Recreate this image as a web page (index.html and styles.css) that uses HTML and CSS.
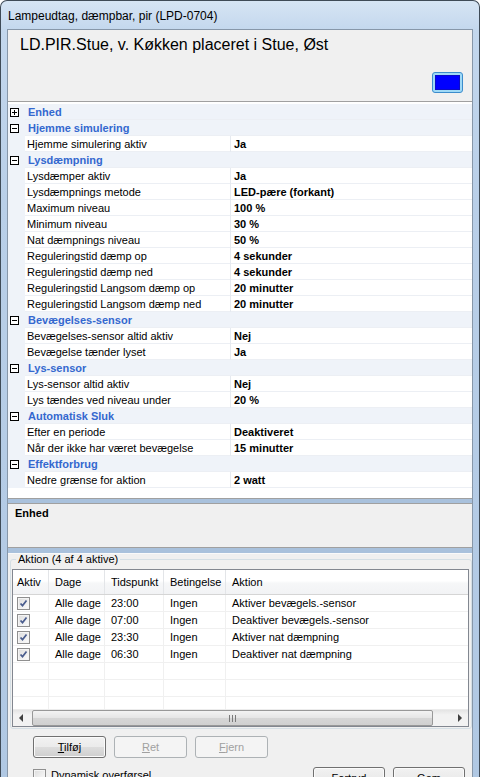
FILE: index.html
```html
<!DOCTYPE html>
<html lang="da">
<head>
<meta charset="utf-8">
<title>Lampeudtag</title>
<link rel="stylesheet" href="styles.css">
</head>
<body>
<div class="window">
  <div class="titlebar">Lampeudtag, dæmpbar, pir (LPD-0704)</div>
  <div class="client">
    <div class="header">
      <div class="header-title">LD.PIR.Stue, v. Køkken placeret i Stue, Øst</div>
      <div class="color-btn"><span class="swatch"></span></div>
    </div>

    <div class="grid">
      <div class="row cat"><span class="m"><svg class="tog" width="9" height="9" viewBox="0 0 9 9"><rect x="0.5" y="0.5" width="8" height="8" fill="#fff" stroke="#000"/><path d="M2 4.5h5M4.5 2v5" stroke="#000"/></svg></span><span class="cn">Enhed</span></div>
      <div class="row cat"><span class="m"><svg class="tog" width="9" height="9" viewBox="0 0 9 9"><rect x="0.5" y="0.5" width="8" height="8" fill="#fff" stroke="#000"/><path d="M2 4.5h5" stroke="#000"/></svg></span><span class="cn">Hjemme simulering</span></div>
      <div class="row"><span class="m"></span><span class="n">Hjemme simulering aktiv</span><span class="v">Ja</span></div>
      <div class="row cat"><span class="m"><svg class="tog" width="9" height="9" viewBox="0 0 9 9"><rect x="0.5" y="0.5" width="8" height="8" fill="#fff" stroke="#000"/><path d="M2 4.5h5" stroke="#000"/></svg></span><span class="cn">Lysdæmpning</span></div>
      <div class="row"><span class="m"></span><span class="n">Lysdæmper aktiv</span><span class="v">Ja</span></div>
      <div class="row"><span class="m"></span><span class="n">Lysdæmpnings metode</span><span class="v">LED-pære (forkant)</span></div>
      <div class="row"><span class="m"></span><span class="n">Maximum niveau</span><span class="v">100 %</span></div>
      <div class="row"><span class="m"></span><span class="n">Minimum niveau</span><span class="v">30 %</span></div>
      <div class="row"><span class="m"></span><span class="n">Nat dæmpnings niveau</span><span class="v">50 %</span></div>
      <div class="row"><span class="m"></span><span class="n">Reguleringstid dæmp op</span><span class="v">4 sekunder</span></div>
      <div class="row"><span class="m"></span><span class="n">Reguleringstid dæmp ned</span><span class="v">4 sekunder</span></div>
      <div class="row"><span class="m"></span><span class="n">Reguleringstid Langsom dæmp op</span><span class="v">20 minutter</span></div>
      <div class="row"><span class="m"></span><span class="n">Reguleringstid Langsom dæmp ned</span><span class="v">20 minutter</span></div>
      <div class="row cat"><span class="m"><svg class="tog" width="9" height="9" viewBox="0 0 9 9"><rect x="0.5" y="0.5" width="8" height="8" fill="#fff" stroke="#000"/><path d="M2 4.5h5" stroke="#000"/></svg></span><span class="cn">Bevægelses-sensor</span></div>
      <div class="row"><span class="m"></span><span class="n">Bevægelses-sensor altid aktiv</span><span class="v">Nej</span></div>
      <div class="row"><span class="m"></span><span class="n">Bevægelse tænder lyset</span><span class="v">Ja</span></div>
      <div class="row cat"><span class="m"><svg class="tog" width="9" height="9" viewBox="0 0 9 9"><rect x="0.5" y="0.5" width="8" height="8" fill="#fff" stroke="#000"/><path d="M2 4.5h5" stroke="#000"/></svg></span><span class="cn">Lys-sensor</span></div>
      <div class="row"><span class="m"></span><span class="n">Lys-sensor altid aktiv</span><span class="v">Nej</span></div>
      <div class="row"><span class="m"></span><span class="n">Lys tændes ved niveau under</span><span class="v">20 %</span></div>
      <div class="row cat"><span class="m"><svg class="tog" width="9" height="9" viewBox="0 0 9 9"><rect x="0.5" y="0.5" width="8" height="8" fill="#fff" stroke="#000"/><path d="M2 4.5h5" stroke="#000"/></svg></span><span class="cn">Automatisk Sluk</span></div>
      <div class="row"><span class="m"></span><span class="n">Efter en periode</span><span class="v">Deaktiveret</span></div>
      <div class="row"><span class="m"></span><span class="n">Når der ikke har været bevægelse</span><span class="v">15 minutter</span></div>
      <div class="row cat"><span class="m"><svg class="tog" width="9" height="9" viewBox="0 0 9 9"><rect x="0.5" y="0.5" width="8" height="8" fill="#fff" stroke="#000"/><path d="M2 4.5h5" stroke="#000"/></svg></span><span class="cn">Effektforbrug</span></div>
      <div class="row"><span class="m"></span><span class="n">Nedre grænse for aktion</span><span class="v">2 watt</span></div>
    </div>

    <div class="splitter s1"></div>
    <div class="desc"><b>Enhed</b></div>
    <div class="splitter s2"></div>

    <div class="bottom">
      <fieldset class="group">
        <legend>Aktion (4 af 4 aktive)</legend>
        <div class="listview">
          <div class="lv-head">
            <span>Aktiv</span><span>Dage</span><span>Tidspunkt</span><span>Betingelse</span><span>Aktion</span>
          </div>
          <div class="lv-body">
            <div class="lv-row"><span><i class="chk"></i></span><span>Alle dage</span><span>23:00</span><span>Ingen</span><span>Aktiver bevægels.-sensor</span></div>
            <div class="lv-row"><span><i class="chk"></i></span><span>Alle dage</span><span>07:00</span><span>Ingen</span><span>Deaktiver bevægels.-sensor</span></div>
            <div class="lv-row"><span><i class="chk"></i></span><span>Alle dage</span><span>23:30</span><span>Ingen</span><span>Aktiver nat dæmpning</span></div>
            <div class="lv-row"><span><i class="chk"></i></span><span>Alle dage</span><span>06:30</span><span>Ingen</span><span>Deaktiver nat dæmpning</span></div>
            <div class="lv-row"><span></span><span></span><span></span><span></span><span></span></div>
            <div class="lv-row"><span></span><span></span><span></span><span></span><span></span></div>
            <div class="lv-row"><span></span><span></span><span></span><span></span><span></span></div>
          </div>
          <div class="hscroll">
            <span class="arrow"><svg width="5" height="8" viewBox="0 0 5 8"><path d="M4 0v8L0 4z" fill="#404040"/></svg></span>
            <span class="thumb"><svg width="8" height="7" viewBox="0 0 8 7"><path d="M0.5 0v7M3.5 0v7M6.5 0v7" stroke="#7a7a7a"/></svg></span>
            <span class="track"></span>
            <span class="arrow"><svg width="5" height="8" viewBox="0 0 5 8"><path d="M1 0v8L5 4z" fill="#404040"/></svg></span>
          </div>
        </div>
      </fieldset>

      <div class="buttons">
        <button class="btn"><u>T</u>ilføj</button>
        <button class="btn disabled"><u>R</u>et</button>
        <button class="btn disabled"><u>F</u>jern</button>
      </div>

      <div class="footer">
        <label class="dyn"><i class="box"></i>Dynamisk overførsel</label>
        <div class="footer-btns">
          <button class="btn">Fortryd</button>
          <button class="btn">Gem</button>
        </div>
      </div>
    </div>
  </div>
</div>
</body>
</html>
```

FILE: styles.css
```css
* { box-sizing: border-box; }
html, body { margin: 0; padding: 0; }
body {
  width: 480px;
  height: 777px;
  overflow: hidden;
  background: #fff;
  font-family: "Liberation Sans", Arial, sans-serif;
  font-size: 11px;
  color: #000;
}

.window {
  width: 480px;
  height: 777px;
  display: flex;
  flex-direction: column;
  border: 1px solid #3f4b57;
  border-bottom: none;
  border-radius: 7px 7px 0 0;
  background: linear-gradient(to bottom, #d6e5f4 0px, #c3d7ed 30px, #b9cfe8 200px, #b0c8e3 777px);
  overflow: hidden;
}

.titlebar {
  height: 28px;
  flex: none;
  display: flex;
  align-items: center;
  padding-left: 7px;
  padding-top: 2px;
  font-size: 12px;
  color: #000;
}

.client {
  flex: 1;
  margin: 0 6px;
  border: 1px solid #8797a9;
  border-bottom: none;
  background: #f0f0f0;
  display: flex;
  flex-direction: column;
  min-height: 0;
}

/* header */
.header {
  height: 71px;
  flex: none;
  display: flex;
  flex-direction: column;
  padding: 5px 9px 8px 12px;
}
.header-title {
  font-size: 16px;
  line-height: 19px;
}
.color-btn {
  margin-top: auto;
  align-self: flex-end;
  width: 31px;
  height: 21px;
  border: 1px solid #3c8ccc;
  border-radius: 3px;
  padding: 2px;
  background: #9fd9f6;
  display: flex;
}
.swatch {
  flex: 1;
  background: #0000ff;
  border: 1px solid #0a0ac8;
}

/* property grid */
.grid {
  height: 398px;
  flex: none;
  background: #fff;
  border-top: 1px solid #a0a0a0;
  border-bottom: 1px solid #a0a0a0;
  padding-top: 2px;
  overflow: hidden;
}
.row {
  height: 16px;
  display: grid;
  grid-template-columns: 17px 206px 1fr;
  border-bottom: 1px solid #eceff4;
  line-height: 16px;
}
.row .m {
  background: #eff3f9;
  display: flex;
  align-items: center;
  padding-left: 2px;
}
.row .n {
  padding-left: 2px;
  white-space: nowrap;
  overflow: hidden;
  border-right: 1px solid #e6eaf0;
}
.row .v {
  padding-left: 3px;
  font-weight: bold;
  white-space: nowrap;
}
.row.cat {
  background: #eff3f9;
}
.row.cat .cn {
  grid-column: 2 / 4;
  padding-left: 3px;
  font-weight: bold;
  color: #3468cf;
}
.tog { display: block; }

/* splitter and description */
.splitter {
  flex: none;
  background: #a9c1dc;
}
.s1 { height: 4px; }
.s2 { height: 5px; }
.desc {
  height: 45px;
  flex: none;
  border-top: 1px solid #a0a0a0;
  border-bottom: 1px solid #a0a0a0;
  background: #f0f0f0;
  padding: 3px 0 0 7px;
  line-height: 13px;
}

/* bottom area */
.bottom {
  flex: 1;
  display: flex;
  flex-direction: column;
  min-height: 0;
  border-top: 1px solid #fafafa;
}
.group {
  margin: -1px 0 0 2px;
  padding: 3px 2px 1px 1px;
  border: 1px solid #d5dfe5;
  border-radius: 3px;
  min-width: 0;
}
.group legend {
  margin-left: 4px;
  padding: 0 2px;
  line-height: 13px;
}

.listview {
  height: 158px;
  border: 1px solid #828790;
  background: #fff;
  display: flex;
  flex-direction: column;
}
.lv-head, .lv-row {
  display: grid;
  grid-template-columns: 36px 56px 59px 62px 1fr;
}
.lv-head {
  height: 25px;
  flex: none;
  background: linear-gradient(to bottom, #ffffff 0%, #ffffff 45%, #f6f7f8 55%, #f2f3f5 100%);
  border-bottom: 1px solid #d5d5d5;
}
.lv-head span {
  display: flex;
  align-items: center;
  padding-left: 6px;
  border-right: 1px solid #e3e5e8;
}
.lv-head span:first-child { padding-left: 4px; }
.lv-head span:last-child { border-right: none; }
.lv-body {
  flex: 1;
  overflow: hidden;
}
.lv-row {
  height: 17px;
  border-bottom: 1px solid #f0f0f0;
}
.lv-row span {
  border-right: 1px solid #f0f0f0;
  padding-left: 6px;
  line-height: 16px;
  white-space: nowrap;
  overflow: hidden;
}
.lv-row span:first-child { padding-left: 4px; display: flex; align-items: center; }
.lv-row span:last-child { border-right: none; }

.chk {
  display: block;
  width: 13px;
  height: 13px;
  border: 1px solid #8f8f8f;
  background:
    url("data:image/svg+xml;utf8,<svg xmlns='http://www.w3.org/2000/svg' width='11' height='11' viewBox='0 0 11 11'><path d='M2.5 5.5l2 2.2 4-5.2' fill='none' stroke='%234a5d8e' stroke-width='1.8'/></svg>") center/11px 11px no-repeat,
    linear-gradient(135deg, #dcdcdc, #fdfdfd);
  box-shadow: inset 0 0 0 1px #f4f4f4;
}

.hscroll {
  height: 17px;
  flex: none;
  display: flex;
  background: linear-gradient(to bottom, #e4e4e4, #f2f2f2 30%, #f2f2f2);
  border-top: 1px solid #ececec;
}
.hscroll .arrow {
  width: 17px;
  display: flex;
  align-items: center;
  justify-content: center;
}
.hscroll .thumb {
  width: 401px;
  margin: 0 0 0 2px;
  border: 1px solid #989898;
  border-radius: 2px;
  background: linear-gradient(to bottom, #f3f3f3, #e5e5e5 50%, #d6d6d6 51%, #d0d0d0);
  display: flex;
  align-items: center;
  justify-content: center;
}
.hscroll .track { flex: 1; }

/* buttons */
.buttons {
  display: flex;
  gap: 8px;
  padding-left: 25px;
  margin-top: 7px;
}
.btn {
  width: 73px;
  height: 22px;
  padding: 0;
  border: 1px solid #707070;
  border-radius: 3px;
  background: linear-gradient(to bottom, #f2f2f2 0%, #ebebeb 49%, #dddddd 51%, #cfcfcf 100%);
  box-shadow: inset 0 0 0 1px #fbfbfb;
  font-family: "Liberation Sans", Arial, sans-serif;
  font-size: 11px;
  color: #000;
}
.btn.disabled {
  border-color: #adb2b5;
  background: #f4f4f4;
  box-shadow: none;
  color: #a0a0a0;
}
.btn u { text-decoration: underline; }

.footer {
  display: flex;
  align-items: flex-start;
  margin-top: 9px;
  padding-left: 25px;
  padding-right: 7px;
}
.dyn {
  display: flex;
  align-items: center;
  gap: 5px;
  height: 14px;
  margin-top: 1px;
}
.box {
  display: block;
  width: 13px;
  height: 13px;
  border: 1px solid #8f8f8f;
  background: linear-gradient(135deg, #dcdcdc, #fdfdfd);
  box-shadow: inset 0 0 0 1px #f4f4f4;
}
.footer-btns {
  margin-left: auto;
  display: flex;
  gap: 8px;
}
.footer-btns .btn { width: 72px; }
```
